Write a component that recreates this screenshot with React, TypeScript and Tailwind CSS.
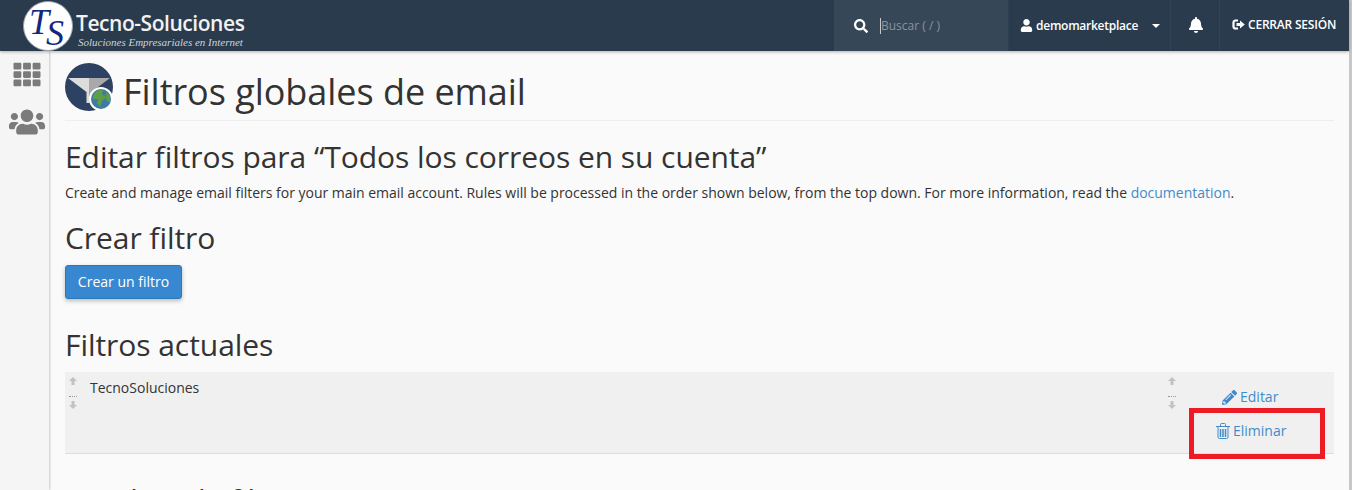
import { FaSearch, FaUser, FaBell, FaTh, FaUsers, FaPencilAlt } from "react-icons/fa";

function LogoMark() {
  return (
    <svg width="50" height="50" viewBox="0 0 50 50" className="shrink-0">
      <circle cx="25" cy="25" r="24.5" fill="#fff" stroke="#9aa3ad" />
      <text x="6" y="33" fontFamily="Liberation Serif, serif" fontStyle="italic" fontSize="36" fill="#12287f">
        T<tspan dx="-3" dy="11">S</tspan>
      </text>
    </svg>
  );
}

function FilterIcon() {
  return (
    <svg width="48" height="48" viewBox="0 0 48 48" className="shrink-0">
      <circle cx="24" cy="24" r="24" fill="#2d4162" />
      <path d="M3 15 H24 V40 H21.5 V29 Z" fill="#dcdcdc" />
      <path d="M45 15 H24 V40 H26.5 V29 Z" fill="#a9a9a9" />
      <circle cx="36" cy="36" r="12" fill="#fff" />
      <circle cx="36" cy="36" r="10" fill="#3f7ba6" />
      <path d="M28 33 C30 28 35 26 38 27 L37 31 L41 34 L37 38 L35 44 L32 40 L33 36 L28 36 Z" fill="#5d9e46" />
      <path d="M41 29 L45 33 L45 40 L41 37 Z" fill="#5d9e46" />
    </svg>
  );
}

function LogoutIcon() {
  return (
    <svg width="13" height="11" viewBox="0 0 13 11" fill="none">
      <path d="M6 1.5 H3.5 A2 2 0 0 0 1.5 3.5 V7.5 A2 2 0 0 0 3.5 9.5 H6" stroke="#fff" strokeWidth="2.2" />
      <path d="M4.5 4 H8 V1.5 L12.8 5.5 L8 9.5 V7 H4.5 Z" fill="#fff" />
    </svg>
  );
}

function TrashIcon() {
  return (
    <svg width="14" height="16" viewBox="0 0 14 16" fill="none" stroke="#428bca" strokeWidth="1">
      <path d="M0 3.5 H14" />
      <path d="M4.5 3 V1.5 Q4.5 0.5 5.5 0.5 H8.5 Q9.5 0.5 9.5 1.5 V3" />
      <path d="M2 3.5 V14 Q2 15.5 3.5 15.5 H10.5 Q12 15.5 12 14 V3.5" />
      <path d="M4.5 6 V14 M7 6 V14 M9.5 6 V14" strokeWidth="1.5" />
    </svg>
  );
}

function MoveHandle() {
  return (
    <div className="flex flex-col items-center w-[8px]">
      <svg width="8" height="8" viewBox="0 0 8 8"><path d="M4 0 L8 4 H5.5 V8 H2.5 V4 H0 Z" fill="#c2c2c2" /></svg>
      <div className="mt-[11px] mb-[4px] w-[8px] border-t border-dotted border-[#999]" />
      <svg width="8" height="8" viewBox="0 0 8 8"><path d="M4 8 L8 4 H5.5 V0 H2.5 V4 H0 Z" fill="#c2c2c2" /></svg>
    </div>
  );
}

export default function App() {
  return (
    <div className="h-screen overflow-hidden flex bg-[#fafafa] text-[#333] font-['Open_Sans',sans-serif]">
      <div className="flex-1 min-w-0 flex flex-col">
        <header className="h-[51px] shrink-0 flex items-stretch bg-[#2a3b4d] text-white shadow-[0_1px_3px_rgba(0,0,0,0.3)] z-10">
          <div className="flex items-center pl-[23px] flex-1">
            <LogoMark />
            <div className="ml-[3px] pt-[8px] flex flex-col">
              <span className="text-[21px] leading-[24px] font-semibold tracking-[-0.45px] text-[#f2f2f2]">Tecno-Soluciones</span>
              <span className="mt-[1px] pl-[2px] text-[11px] leading-[13px] italic text-[#cfd3d6] font-['Liberation_Serif',serif]">Soluciones Empresariales en Internet</span>
            </div>
          </div>
          <div className="w-[175px] bg-[#364758] flex items-center pl-[20px] border-r border-[#2f4052]">
            <FaSearch size={14} />
            <span className="ml-[12px] w-px h-[16px] bg-[#c8c8c8]" />
            <span className="text-[12px] text-[#8a949e]">Buscar ( / )</span>
          </div>
          <div className="w-[162px] flex items-center pl-[11px] border-r border-[#324355]">
            <FaUser size={13} />
            <span className="ml-[3px] text-[12px] font-semibold tracking-[-0.25px]">demomarketplace</span>
            <span className="ml-[14px] w-0 h-0 border-x-[4px] border-x-transparent border-t-[4px] border-t-white" />
          </div>
          <div className="w-[49px] flex items-center justify-center border-r border-[#324355] pl-[2px] pb-[2px]">
            <FaBell size={16} />
          </div>
          <div className="w-[129px] flex items-center pl-[12px] pb-[2px]">
            <LogoutIcon />
            <span className="ml-[3px] text-[12px] font-semibold tracking-[-0.2px]">CERRAR SESIÓN</span>
          </div>
        </header>
        <div className="flex-1 flex min-h-0">
          <aside className="w-[49px] shrink-0 bg-[#f5f5f5] shadow-[1px_0_2px_rgba(0,0,0,0.2)] flex flex-col items-center pt-[10px] pl-[5px] text-[#7b7b7b]">
            <FaTh size={30} className="h-[27px]" />
            <FaUsers size={36} className="mt-[16px]" />
          </aside>
          <main className="flex-1 min-w-0 pl-[16px] pr-[15px]">
            <div className="flex items-center h-[70px] border-b border-[#eee] pt-[2px]">
              <FilterIcon />
              <h1 className="ml-[10px] mt-[10px] text-[36px] leading-[40px] tracking-[-0.04px] text-[#333]">Filtros globales de email</h1>
            </div>
            <h2 className="mt-[19px] text-[30px] leading-[33px] tracking-[-0.06px]">Editar filtros para “Todos los correos en su cuenta”</h2>
            <p className="mt-[10px] text-[14px] leading-[20px] tracking-[-0.012px]">
              Create and manage email filters for your main email account. Rules will be processed in the order shown below, from the top down. For more information, read the <a className="text-[#428bca]">documentation</a>.
            </p>
            <h2 className="mt-[18px] text-[30px] leading-[33px] tracking-[-0.06px]">Crear filtro</h2>
            <button className="mt-[11px] block h-[34px] w-[117px] pb-[2px] rounded-[3px] bg-[#3788d0] border border-[#2e78ba] text-white text-[14px] shadow-[0_2px_4px_rgba(0,0,0,0.25)]">
              Crear un filtro
            </button>
            <h2 className="mt-[29px] text-[30px] leading-[33px] tracking-[-0.06px]">Filtros actuales</h2>
            <div className="mt-[11px] h-[82px] flex bg-[#f0f0f0] border-b border-[#ddd]">
              <div className="pl-[4px] pt-[5px]"><MoveHandle /></div>
              <div className="flex-1 pl-[13px] pt-[6px] text-[14px] leading-[20px]">TecnoSoluciones</div>
              <div className="pt-[5px]"><MoveHandle /></div>
              <div className="w-[158px] flex flex-col text-[14px] leading-[20px] text-[#428bca]">
                <a className="pt-[15px] pl-[46px] flex items-center gap-[3px]"><FaPencilAlt size={15} color="#428bca" />Editar</a>
                <a className="mt-[14px] pl-[40px] flex items-center gap-[3px]"><TrashIcon />Eliminar</a>
              </div>
            </div>
            <h2 className="mt-[29px] text-[30px] leading-[33px] tracking-[-0.06px]">Pruebas de filtro</h2>
          </main>
        </div>
      </div>
      <div className="w-[3px] shrink-0 bg-[#c8c8c8]" />
      <div className="absolute left-[1189px] top-[408px] w-[136px] h-[51px] border-[5px] border-[#ed1c24]" />
    </div>
  );
}
